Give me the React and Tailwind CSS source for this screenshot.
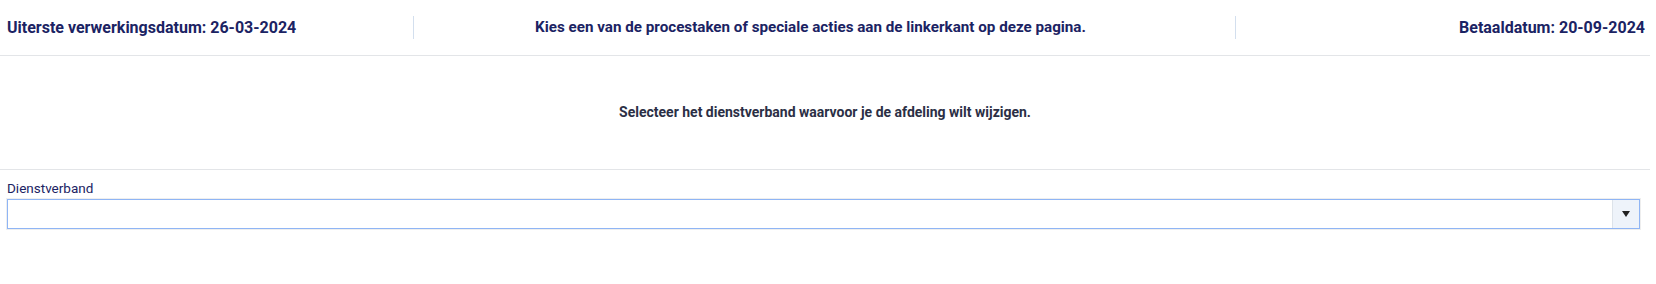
export default function App() {
    return (
        <div className="w-[1650px] bg-white font-['Roboto','Liberation_Sans',sans-serif]">
            {/* Header with dates and instruction */}
            <div className="flex items-center h-[56px] border-b border-[#e3e5e8]">
                <div className="w-[414px] pl-[7px] flex items-center h-[23px] border-r border-[#d3dfee]">
                    <span className="text-[16px] font-bold text-[#1b2363]">
                        Uiterste verwerkingsdatum: 26-03-2024
                    </span>
                </div>
                <div className="w-[822px] flex items-center justify-center h-[23px] border-r border-[#d3dfee] pr-[28px]">
                    <span className="text-[15.2px] font-bold text-[#1b2363]">
                        Kies een van de procestaken of speciale acties aan de linkerkant op deze pagina.
                    </span>
                </div>
                <div className="flex-1 flex items-center justify-end pr-[5px] h-[23px]">
                    <span className="text-[16px] font-bold text-[#1b2363]">Betaaldatum: 20-09-2024</span>
                </div>
            </div>

            {/* Intro */}
            <div className="h-[114px] flex items-center justify-center border-b border-[#e3e5e8]">
                <p className="text-[14px] font-bold text-[#2b2f45]">
                    Selecteer het dienstverband waarvoor je de afdeling wilt wijzigen.
                </p>
            </div>

            {/* Form field */}
            <div className="pl-[6px] pr-[9px] pt-[8px]">
                <label className="block pl-[1px] text-[13.5px] leading-[20px] text-[#1b2363]">Dienstverband</label>
                <div className="p-px bg-[#eeeeee]">
                    <div className="flex h-[30px] border border-[#8fb5f5] bg-white">
                        <div className="flex-1" />
                        <div className="w-[27px] flex items-center justify-center bg-[#eef3fa] border-l border-[#dde3ea]">
                            <svg width="8" height="6" viewBox="0 0 8 6">
                                <path d="M0 0 L8 0 L4 6 Z" fill="#222" />
                            </svg>
                        </div>
                    </div>
                </div>
            </div>
        </div>
    );
}
